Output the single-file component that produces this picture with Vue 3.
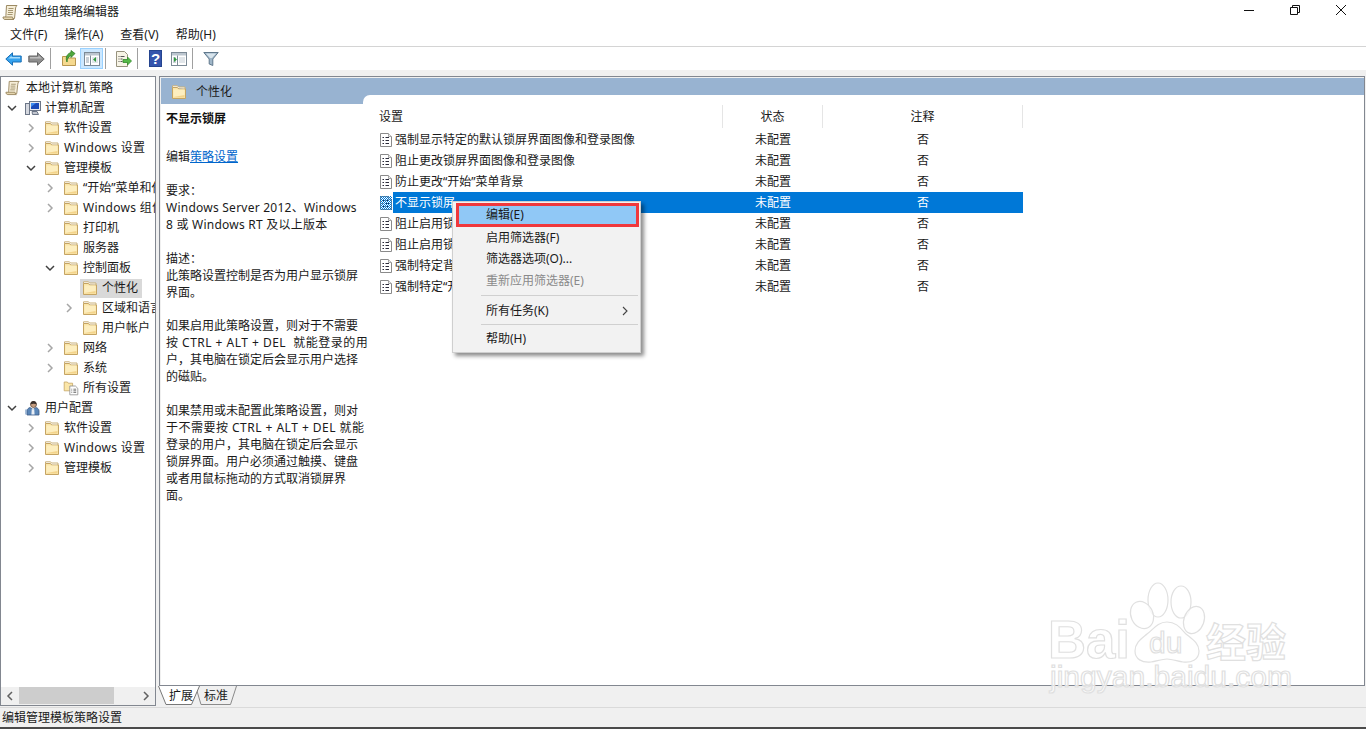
<template>
  <div class="app">
    <!-- shared icons -->
    <svg class="defs" width="0" height="0">
      <defs>
        <pattern id="dither" width="2" height="2" patternUnits="userSpaceOnUse">
          <rect width="1" height="1" fill="#0078d7" />
          <rect x="1" y="1" width="1" height="1" fill="#0078d7" />
        </pattern>
      </defs>
      <symbol id="i-folder" viewBox="0 0 16 16">
        <path d="M1.5 3.5V1.8h5l1 1.2h6.500v2" fill="#fff" stroke="#c9b078" />
        <path d="M1.500 14.500V3.500h5l1.200 1.500h6.800v9.500z" fill="#fbe6a8" stroke="#c5a463" />
        <path d="M2.500 13.500V5.500h11v8z" fill="#fdeebf" />
        <path d="M2.500 13.500h11V11l-11 2z" fill="#f3d48c" />
      </symbol>
      <symbol id="i-folder-all" viewBox="0 0 20 18">
        <path d="M1.500 12.500V1.500h4l1 1.500h5.500v9.500z" fill="#fbe6a8" stroke="#c5a463" />
        <path d="M8.500 6.500h7l3 3v8h-10z" fill="#fff" stroke="#8c8c8c" />
        <path d="M10.500 10.500h1m1.500 0h3.500M10.500 12.500h1m1.500 0h3.500M10.500 14.500h1m1.500 0h3.500" stroke="#555" />
      </symbol>
      <symbol id="i-scroll" viewBox="0 0 17 17">
        <path d="M4.500 1.500h10.500c-1 1-1.500 2-1.500 3.500l-1 9.500H2.500c1-.8 1.300-2 1.400-3z" fill="#f6eed8" stroke="#9c8a63" />
        <path d="M1 13h9.500c0 1 .5 2 1.500 2.500H3c-1.200 0-2-1-2-2.500z" fill="#e5d5ae" stroke="#9c8a63" />
        <path d="M6.500 4.500h5M6 6.500h5M6 8.500h5M5.500 10.500h5" stroke="#a59671" />
      </symbol>
      <symbol id="i-computer" viewBox="0 0 16 16">
        <rect x="4.500" y="1.500" width="11" height="9" fill="#e6e8ee" stroke="#6c7687" />
        <rect x="6" y="3" width="8" height="6" fill="#1a49b8" />
        <path d="M6 3h5L6 7z" fill="#3d8bf0" />
        <rect x="0.500" y="3.500" width="4" height="11" fill="#d5d8df" stroke="#6c7687" />
        <path d="M7 11.500h5l1.500 3h-6z" fill="#c2c6cf" stroke="#6c7687" />
      </symbol>
      <symbol id="i-user" viewBox="0 0 16 16">
        <path d="M2 15v-4c0-2 1.500-3 3-3.500l3 2 3-2c1.500.5 3 1.500 3 3.500v4z" fill="#5a86b8" stroke="#3c5c86" stroke-width=".8" />
        <path d="M6.800 8.500l1.200 1 1.200-1 .4 6H6.400z" fill="#e9eef5" />
        <circle cx="8.500" cy="4.500" r="3" fill="#c69c7e" stroke="#5e4a3e" stroke-width=".8" />
        <path d="M5.500 4.500C5.500 2 7 1 8.500 1s3 1 3 3.500C10 3.500 7.500 3.500 5.500 4.500z" fill="#3a302b" />
        <path d="M1 9.500v5" stroke="#8aa8cc" stroke-width="1.500" />
      </symbol>
      <symbol id="i-policy" viewBox="0 0 12 14">
        <path d="M.5.500h8l3 3v10H.5z" fill="#fff" stroke="#8a8a8a" />
        <path d="M8.500.500v3h3" fill="#eee" stroke="#a5a5a5" />
        <path d="M2.500 4.500h1.500M5.500 4.500h3.500M2.500 7.500h1.500M5.500 7.500h3.500M2.500 10.500h1.500M5.500 10.500h3.500" stroke="#2b2b3a" />
      </symbol>
      <symbol id="i-pane" viewBox="0 0 16 14">
        <rect x=".5" y=".5" width="15" height="13" fill="#fff" stroke="#7c8a96" />
        <rect x="1" y="1" width="14" height="2.500" fill="#bcc6cf" />
        <path d="M6.500 3.500v10" stroke="#7c8a96" />
        <path d="M2 6h3M2 8h3M2 10h3" stroke="#93a1ad" />
        <path d="M8 6h6M8 8h6M8 10h6" stroke="#c3ccd4" />
      </symbol>
    </svg>

    <header class="titlebar">
      <div class="title">
        <svg class="ico16" width="17" height="17"><use href="#i-scroll" /></svg>
        <span>本地组策略编辑器</span>
      </div>
      <div class="win-btns">
        <svg width="12" height="12" viewBox="0 0 12 12"><path d="M1 6.500h10" stroke="#111" /></svg>
        <svg width="12" height="12" viewBox="0 0 12 12"><path d="M1.500 3.500h7v7h-7zM3.500 3.500v-2h7v7h-2" fill="none" stroke="#111" /></svg>
        <svg width="12" height="12" viewBox="0 0 12 12"><path d="M1 1l10 10M11 1L1 11" stroke="#111" /></svg>
      </div>
    </header>

    <nav class="menubar">
      <span v-for="m in menus" :key="m">{{ m }}</span>
    </nav>

    <div class="toolbar">
      <button class="tb">
        <svg width="17" height="14" viewBox="0 0 17 14"><path d="M.8 7L7.500.8v3.200h8.700v6H7.500v3.200z" fill="#35a2ee" stroke="#1a6fb5" /><path d="M3 7l3.500-3.200V5h8.500v1.500H4z" fill="#a7dcfb" /></svg>
      </button>
      <button class="tb">
        <svg width="17" height="14" viewBox="0 0 17 14"><path d="M16.200 7L9.500.8v3.200H.8v6h8.700v3.200z" fill="#8e8e8e" stroke="#666" /><path d="M2 5h8.500V3.500L14 6.500H2z" fill="#bdbdbd" /></svg>
      </button>
      <i class="sep"></i>
      <button class="tb">
        <svg width="16" height="17" viewBox="0 0 16 17"><path d="M1.500 15.500V6.500h4l1 1.500h8v7.500z" fill="#f5d98f" stroke="#b8964f" /><path d="M6 12c0-3 1.500-5.500 4-6.500V7.500l4-4-4-3v2C6.500 3.500 4 7 6 12z" fill="#4fa83d" stroke="#2f7d25" stroke-width=".8" /></svg>
      </button>
      <button class="tb on">
        <svg width="16" height="14"><use href="#i-pane" /><path d="M12 5v5L9 7.500z" fill="#2f9a3c" /></svg>
      </button>
      <i class="sep"></i>
      <button class="tb">
        <svg width="17" height="16" viewBox="0 0 17 16"><path d="M1.500.5h8l3 3v12h-11z" fill="#f7f4e6" stroke="#97927e" /><path d="M3.500 5.500h1m1 0h4M3.500 8h1m1 0h2M3.500 10.500h1m1 0h2" stroke="#555" /><path d="M8 8.500h4.500V6l4 4-4 4v-2.500H8z" fill="#55b947" stroke="#338a2b" stroke-width=".8" /></svg>
      </button>
      <i class="sep"></i>
      <button class="tb">
        <svg width="13" height="17" viewBox="0 0 13 17"><rect width="13" height="17" fill="#24448f" /><rect x="1" y="1" width="11" height="15" fill="#3454ac" /><text x="6.500" y="13.500" text-anchor="middle" class="help-q">?</text></svg>
      </button>
      <button class="tb">
        <svg width="16" height="14"><use href="#i-pane" /><path d="M3 5v5l3-2.500z" fill="#2f9a3c" /></svg>
      </button>
      <i class="sep"></i>
      <button class="tb">
        <svg width="16" height="16" viewBox="0 0 16 16"><path d="M.8 1.500h14.400L9.800 8v6.500l-3.600-1.500V8z" fill="#9fb6c8" stroke="#60788c" /><path d="M3 2.500h10L9 7H7z" fill="#d8e4ec" /></svg>
      </button>
    </div>

    <main class="workspace">
      <aside class="tree-pane">
        <ul class="tree">
          <li v-for="(n, i) in tree" :key="i" class="row" :style="{ paddingLeft: n.level ? 5 + (n.level - 1) * 19 + 'px' : '0' }">
            <span v-if="n.level" class="arrow">
              <svg v-if="n.state === 'closed'" width="8" height="10" viewBox="0 0 8 10"><path d="M2 1l4 4-4 4" fill="none" stroke="#a6a6a6" stroke-width="1.500" /></svg>
              <svg v-else-if="n.state === 'open'" width="10" height="8" viewBox="0 0 10 8"><path d="M1 2l4 4 4-4" fill="none" stroke="#404040" stroke-width="1.500" /></svg>
            </span>
            <span class="node" :class="{ sel: n.selected, root: !n.level }">
              <svg width="16" height="16"><use :href="'#i-' + (n.icon || 'folder')" /></svg>
              <span class="node-label" :class="{ wide: n.label.startsWith('Windows') }">{{ n.label }}</span>
            </span>
          </li>
        </ul>
        <div class="hscroll">
          <svg width="8" height="10" viewBox="0 0 8 10"><path d="M6 1L2 5l4 4" fill="none" stroke="#606060" stroke-width="1.500" /></svg>
          <div class="track"><div class="thumb"></div></div>
          <svg width="8" height="10" viewBox="0 0 8 10"><path d="M2 1l4 4-4 4" fill="none" stroke="#606060" stroke-width="1.500" /></svg>
        </div>
      </aside>

      <section class="right">
        <div class="view">
          <div class="desc">
            <div class="band">
              <svg width="16" height="16"><use href="#i-folder" /></svg>
              <span>个性化</span>
            </div>
            <div class="desc-body">
              <h3>不显示锁屏</h3>
              <p class="edit">编辑<a>策略设置</a></p>
              <p v-for="(block, b) in description" :key="b">
                <span v-for="line in block" :key="line" class="line" :class="{ wide: line.includes('Windows'), ctrl: line.includes('CTRL') }">{{ line }}</span>
              </p>
            </div>
          </div>
          <div class="listing">
            <div class="thead">
              <div class="c-name">设置</div>
              <div class="c-state">状态</div>
              <div class="c-note">注释</div>
            </div>
            <div v-for="(r, i) in rows" :key="i" class="trow">
              <svg width="12" height="14" class="pol"><use href="#i-policy" /><rect v-if="r.sel" width="12" height="14" fill="url(#dither)" /></svg>
              <div class="cells" :class="{ sel: r.sel }">
                <span class="t-name">{{ r.name }}</span>
                <span class="t-state">未配置</span>
                <span class="t-note">否</span>
              </div>
            </div>
          </div>
        </div>
        <div class="tabs">
          <svg width="90" height="21" viewBox="0 0 90 21">
            <path d="M37.500 0L43 18.500H72.500L78.500 0" fill="#f0f0f0" stroke="#8a8a8a" />
            <path d="M0.500 0L8 18.500H33.500L41.500 0" fill="#fff" stroke="#777" />
            <text x="11" y="14" class="tab-t">扩展</text>
            <text x="46" y="14" class="tab-t">标准</text>
          </svg>
        </div>
      </section>
    </main>

    <footer class="status">编辑管理模板策略设置</footer>

    <!-- context menu -->
    <div class="ctx">
      <div class="ctx-item active">编辑(E)</div>
      <div class="ctx-item">启用筛选器(F)</div>
      <div class="ctx-item">筛选器选项(O)...</div>
      <div class="ctx-item off">重新应用筛选器(E)</div>
      <div class="ctx-sep"></div>
      <div class="ctx-item more">
        <span>所有任务(K)</span>
        <svg width="6" height="10" viewBox="0 0 6 10"><path d="M1 1l4 4-4 4" fill="none" stroke="#444" stroke-width="1.100" /></svg>
      </div>
      <div class="ctx-sep short"></div>
      <div class="ctx-item">帮助(H)</div>
    </div>

    <!-- watermark -->
    <svg class="mark" width="326" height="154" viewBox="0 0 326 154">
      <g fill="#fff" fill-opacity=".75" stroke="#e0e0e0" stroke-width="1.200">
        <ellipse cx="118" cy="25" rx="10" ry="17" />
        <ellipse cx="141" cy="27" rx="10" ry="16" />
        <ellipse cx="102" cy="40" rx="11" ry="14" transform="rotate(-25 102 40)" />
        <ellipse cx="154" cy="45" rx="10" ry="14" transform="rotate(20 154 45)" />
        <path d="M127 47c10 0 14 7 19 12 6 5 13 9 13 17 0 9-8 12-16 11-6-1-11-3-16-3s-10 2-16 3c-9 1-16-3-16-11s6-12 12-17c6-4 10-12 20-12z" />
        <text x="8" y="83" class="m-bai" textLength="82" lengthAdjust="spacingAndGlyphs">Bai</text>
        <text x="109" y="78" class="m-du">du</text>
        <text x="166" y="82" class="m-cn">经验</text>
        <text x="10" y="112" class="m-url" textLength="242">jingyan.baidu.com</text>
      </g>
    </svg>
  </div>
</template>

<script setup>
const menus = ['文件(F)', '操作(A)', '查看(V)', '帮助(H)'];

const tree = [
  { level: 0, label: '本地计算机 策略', icon: 'scroll' },
  { level: 1, label: '计算机配置', icon: 'computer', state: 'open' },
  { level: 2, label: '软件设置', state: 'closed' },
  { level: 2, label: 'Windows 设置', state: 'closed' },
  { level: 2, label: '管理模板', state: 'open' },
  { level: 3, label: '“开始”菜单和任务栏', state: 'closed' },
  { level: 3, label: 'Windows 组件', state: 'closed' },
  { level: 3, label: '打印机' },
  { level: 3, label: '服务器' },
  { level: 3, label: '控制面板', state: 'open' },
  { level: 4, label: '个性化', selected: true },
  { level: 4, label: '区域和语言', state: 'closed' },
  { level: 4, label: '用户帐户' },
  { level: 3, label: '网络', state: 'closed' },
  { level: 3, label: '系统', state: 'closed' },
  { level: 3, label: '所有设置', icon: 'folder-all' },
  { level: 1, label: '用户配置', icon: 'user', state: 'open' },
  { level: 2, label: '软件设置', state: 'closed' },
  { level: 2, label: 'Windows 设置', state: 'closed' },
  { level: 2, label: '管理模板', state: 'closed' },
];

// fullwidth punctuation, as the dialog shows it
const description = [
  ['要求\uFF1A', 'Windows Server 2012、Windows', '8 或 Windows RT 及以上版本'],
  ['描述\uFF1A', '此策略设置控制是否为用户显示锁屏', '界面。'],
  ['如果启用此策略设置\uFF0C则对于不需要', '按 CTRL + ALT + DEL  就能登录的用', '户\uFF0C其电脑在锁定后会显示用户选择', '的磁贴。'],
  ['如果禁用或未配置此策略设置\uFF0C则对', '于不需要按 CTRL + ALT + DEL 就能', '登录的用户\uFF0C其电脑在锁定后会显示', '锁屏界面。用户必须通过触摸、键盘', '或者用鼠标拖动的方式取消锁屏界', '面。'],
];

const rows = [
  { name: '强制显示特定的默认锁屏界面图像和登录图像' },
  { name: '阻止更改锁屏界面图像和登录图像' },
  { name: '防止更改“开始”菜单背景' },
  { name: '不显示锁屏', sel: true },
  { name: '阻止启用锁屏相机' },
  { name: '阻止启用锁屏幻灯片放映' },
  { name: '强制特定背景和主题色' },
  { name: '强制特定“开始”背景' },
];
</script>

<style>
body { margin: 0; background: #fff; }
</style>

<style scoped>
.app {
  position: relative;
  display: flex;
  flex-direction: column;
  height: 729px;
  overflow: hidden;
  background: #fff;
  color: #1a1a1a;
  font: 12px/16px "Noto Sans", "Noto Sans CJK SC", sans-serif;
}
.defs { position: absolute; }
.wide { letter-spacing: .3px; }

.titlebar { display: flex; align-items: flex-start; justify-content: space-between; height: 23px; flex: none; }
.title { display: flex; align-items: center; gap: 4px; height: 22px; margin-top: 1px; padding-left: 2px; }
.win-btns { display: flex; gap: 34px; margin-top: 4px; padding-right: 19px; }
.win-btns svg { display: block; }

.menubar { display: flex; gap: 17px; height: 24px; flex: none; align-items: center; padding-left: 10px; box-sizing: border-box; border-bottom: 1px solid #d4d4d4; }

.toolbar { display: flex; align-items: center; height: 23px; flex: none; padding-left: 2px; background: #fff; }
.tb { width: 23px; height: 21px; padding: 0; display: flex; align-items: center; justify-content: center; background: none; border: 1px solid transparent; box-sizing: border-box; }
.tb.on { background: #cce8ff; border-color: #99d1ff; }
.sep { width: 1px; height: 21px; margin: 0 6px 0 2px; background: #a0a0a0; }
.help-q { font: bold 15px "Liberation Sans", sans-serif; fill: #fff; }

.workspace { flex: 1; display: flex; min-height: 0; background: #f0f0f0; padding-top: 6px; }
.tree-pane { width: 156px; flex: none; display: flex; flex-direction: column; box-sizing: border-box; border: 1px solid #828790; background: #fff; margin-bottom: 1px; }
.tree { list-style: none; margin: 0; padding: 1px 0 0; flex: 1; overflow: hidden; }
.row { display: flex; align-items: center; height: 20px; white-space: nowrap; }
.arrow { width: 12px; flex: none; display: flex; justify-content: center; }
.node { display: flex; align-items: center; gap: 4px; height: 19px; margin-left: 5px; padding: 0 4px 0 2px; }
.node.root { margin-left: 2px; padding-left: 2px; gap: 5px; }
.node.sel { background: #d9d9d9; }
.node svg { display: block; flex: none; }
.hscroll { height: 17px; display: flex; align-items: center; gap: 5px; padding: 0 5px 1px 5px; background: #f0f0f0; }
.track { flex: 1; height: 100%; }
.thumb { width: 95px; height: 100%; background: #cdcdcd; }

.right { flex: 1; min-width: 0; display: flex; flex-direction: column; margin-left: 3px; margin-right: 1px; }
.view { flex: 1; min-height: 0; display: flex; background: #98b3d1; border: 1px solid #828790; box-shadow: inset 1px 1px 0 #f0f0f0; padding: 1px 0 0 1px; }
/* long lines run past the column and stay readable over the list */
.desc { width: 202px; flex: none; display: flex; flex-direction: column; position: relative; z-index: 1; }
.band { height: 26px; box-sizing: border-box; padding: 2px 0 0 10px; display: flex; align-items: center; gap: 9px; flex: none; }
.band svg { display: block; }
.desc-body { flex: 1; background: #fff; padding: 6px 0 0 5px; line-height: 17px; white-space: pre; }
.desc-body h3 { margin: 0; font-size: 12px; font-weight: 700; line-height: 17px; color: #111; }
.desc-body p { margin: 0 0 17px; }
.desc-body p:nth-of-type(3) { margin-bottom: 16px; }
.desc-body .edit { margin-top: 21px; margin-bottom: 17px; }
.edit a { color: #0066cc; text-decoration: underline; }
.line { display: block; }
.line.wide { letter-spacing: .24px; }
.line.ctrl { letter-spacing: .48px; }

.listing { flex: 1; margin-top: 17px; padding: 10px 0 0 17px; background: #fff; border-top-left-radius: 7px; }
.thead { display: flex; height: 24px; width: 644px; padding-bottom: 1px; align-items: center; box-sizing: border-box; }
.thead > div { height: 100%; display: flex; align-items: center; box-sizing: border-box; border-right: 1px solid #e5e5e5; }
.c-name { width: 344px; margin-left: -1px; }
.c-state { width: 100px; justify-content: center; }
.c-note { width: 200px; justify-content: center; }
.trow { display: flex; align-items: center; height: 21px; width: 643px; }
.pol { display: block; flex: none; }
.cells { display: flex; align-items: center; height: 21px; flex: 1; margin-left: 1px; padding-left: 2px; white-space: nowrap; }
.cells.sel { background: #0078d7; color: #fff; }
.t-name { width: 360px; flex: none; }
.t-state { width: 162px; flex: none; }
.t-note { flex: none; }

.tabs { height: 21px; flex: none; }
.tabs svg { display: block; margin-left: -1px; }
.tab-t { font: 12px "Noto Sans CJK SC", sans-serif; fill: #1a1a1a; }

.status { height: 20px; flex: none; box-sizing: border-box; padding-left: 2px; line-height: 20px; background: #f0f0f0; border-top: 1px solid #dadada; }
.app::after { content: ""; height: 2px; flex: none; background: #4a4a4a; }

.ctx {
  position: absolute;
  z-index: 2;
  left: 452px;
  top: 201px;
  width: 189px;
  height: 152px;
  box-sizing: border-box;
  padding: 1px 0 0;
  background: #f2f2f2;
  border: 1px solid #cfcfcf;
  box-shadow: 3px 3px 4px rgba(0, 0, 0, .45);
}
.ctx-item { height: 21.6px; line-height: 21.6px; padding-left: 33px; color: #1a1a1a; }
.ctx-item.active { height: 24px; line-height: 18px; margin: 0 0 -.5px 3px; width: 183px; box-sizing: border-box; padding-left: 27px; background: #90c8f6; border: 3px solid #f0383c; }
.ctx-item.off { color: #8a8a8a; }
.ctx-item.more { display: flex; align-items: center; justify-content: space-between; padding-right: 12px; }
.ctx-sep { height: 8.5px; margin: 0 2px 0 28px; background: linear-gradient(#d0d0d0, #d0d0d0) center / 100% 1px no-repeat; }
.ctx-sep.short { height: 7px; }

.mark { position: absolute; z-index: 2; left: 1040px; top: 575px; pointer-events: none; }
.m-bai { font: 700 54px "Liberation Sans", sans-serif; }
.m-du { font: 400 30px "Liberation Sans", sans-serif; }
.m-cn { font: 700 40px "Noto Sans CJK SC", sans-serif; }
.m-url { font: 400 30px "Liberation Sans", sans-serif; }
</style>
